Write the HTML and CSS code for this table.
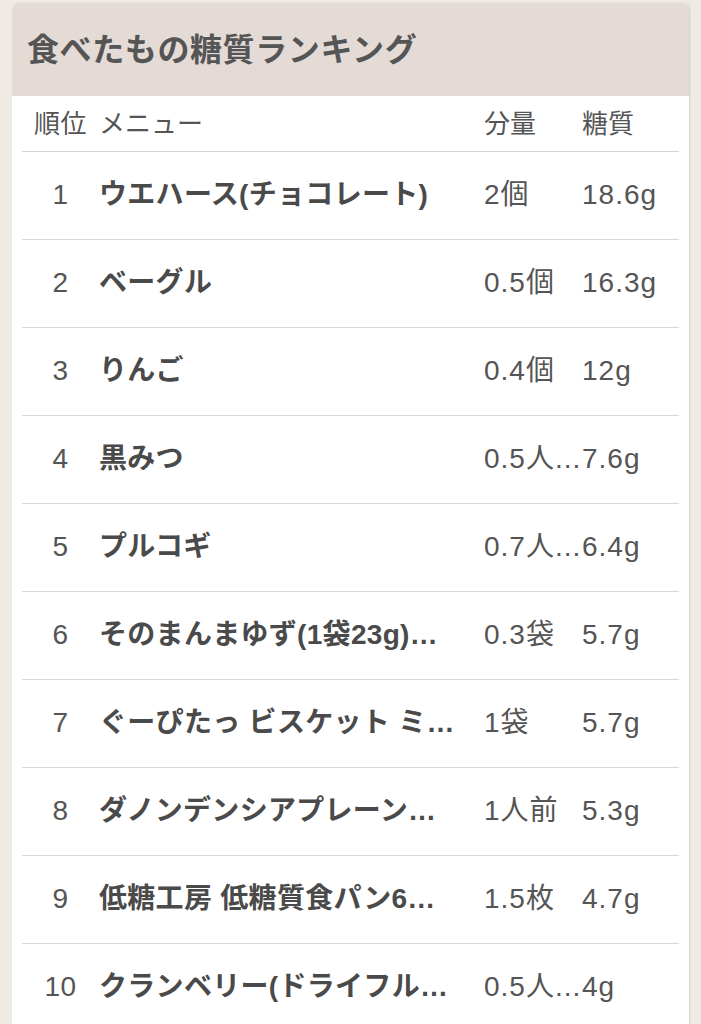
FILE: index.html
```html
<!DOCTYPE html>
<html lang="ja">
<head>
<meta charset="utf-8">
<link rel="stylesheet" href="styles.css">
</head>
<body>
<div class="card">
  <div class="card-head">食べたもの糖質ランキング</div>
  <div class="card-body">
    <table class="rank">
      <colgroup><col class="c-rank"><col class="c-menu"><col class="c-amt"><col class="c-sugar"></colgroup>
      <thead>
        <tr><th class="rk">順位</th><th>メニュー</th><th>分量</th><th>糖質</th></tr>
      </thead>
      <tbody>
        <tr><td class="rk">1</td><td class="menu">ウエハース(チョコレート)</td><td class="amt">2個</td><td class="num">18.6g</td></tr>
        <tr><td class="rk">2</td><td class="menu">ベーグル</td><td class="amt">0.5個</td><td class="num">16.3g</td></tr>
        <tr><td class="rk">3</td><td class="menu">りんご</td><td class="amt">0.4個</td><td class="num">12g</td></tr>
        <tr><td class="rk">4</td><td class="menu">黒みつ</td><td class="amt">0.5人...</td><td class="num">7.6g</td></tr>
        <tr><td class="rk">5</td><td class="menu">プルコギ</td><td class="amt">0.7人...</td><td class="num">6.4g</td></tr>
        <tr><td class="rk">6</td><td class="menu">そのまんまゆず(1袋23g)あたり</td><td class="amt">0.3袋</td><td class="num">5.7g</td></tr>
        <tr><td class="rk">7</td><td class="menu">ぐーぴたっ ビスケット ミルクチョコ</td><td class="amt">1袋</td><td class="num">5.7g</td></tr>
        <tr><td class="rk">8</td><td class="menu">ダノンデンシアプレーン砂糖不使用</td><td class="amt">1人前</td><td class="num">5.3g</td></tr>
        <tr><td class="rk">9</td><td class="menu">低糖工房 低糖質食パン6枚切り</td><td class="amt">1.5枚</td><td class="num">4.7g</td></tr>
        <tr><td class="rk">10</td><td class="menu">クランベリー(ドライフルーツ)</td><td class="amt">0.5人...</td><td class="num">4g</td></tr>
      </tbody>
    </table>
  </div>
</div>
</body>
</html>
```

FILE: styles.css
```css
html, body {
  margin: 0;
  padding: 0;
  background: #efebe4;
}
body {
  font-family: "Liberation Sans", "Noto Sans CJK JP", sans-serif;
  color: #555;
  padding: 3px 12px 0 12px;
}
.card {
  background: #fff;
  border-radius: 6px 6px 0 0;
  box-shadow: 1px 0 2px rgba(0,0,0,0.12);
  overflow: hidden;
}
.card-head {
  background: #e4dbd6;
  height: 93px;
  box-sizing: border-box;
  padding: 0 0 6px 15px;
  display: flex;
  align-items: center;
  font-size: 32px;
  font-weight: bold;
  color: #555;
  letter-spacing: 0.6px;
}
.card-body {
  padding: 0 10px;
}
.rank {
  width: 100%;
  border-collapse: collapse;
  table-layout: fixed;
}
.c-rank { width: 77px; }
.c-amt { width: 98px; }
.c-sugar { width: 97px; }
.rank th {
  font-weight: normal;
  font-size: 26px;
  line-height: 30px;
  height: 55px;
  text-align: left;
  padding: 0;
  color: #555;
  border-bottom: 1px solid #d4d4d4;
}
.rank td {
  font-size: 28px;
  line-height: 32px;
  height: 85px;
  padding: 0 0 2px 0;
  color: #555;
  border-bottom: 1px solid #d8d8d8;
  white-space: nowrap;
  overflow: hidden;
  text-overflow: ellipsis;
}
.rank .rk {
  text-align: center;
  letter-spacing: 0.5px;
}
.rank td.menu {
  font-weight: bold;
  color: #4a4a4a;
  padding-right: 24px;
  letter-spacing: 0.3px;
}
.rank td.amt {
  letter-spacing: 1px;
  overflow: visible;
}
.rank td.num {
  letter-spacing: 1px;
}
```
